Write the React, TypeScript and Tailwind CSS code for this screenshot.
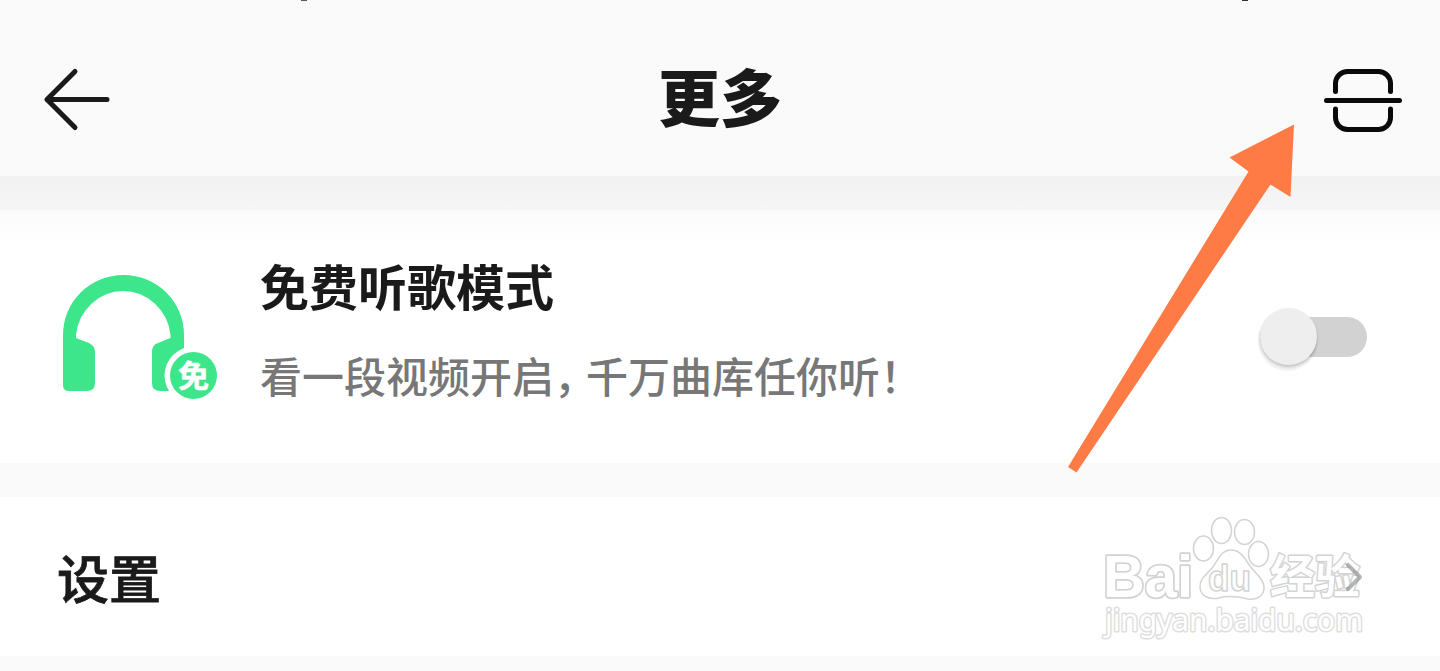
function BackArrow() {
  return (
    <svg width="70" height="66" viewBox="0 0 70 66" fill="none" stroke="#1a1a1a" strokeWidth="5" strokeLinecap="round" strokeLinejoin="round">
      <path d="M34 4.500 6 32.500 34 60.500M6 32.500H66" />
    </svg>
  );
}

function ScanIcon() {
  return (
    <svg width="80" height="66" viewBox="0 0 80 66" fill="none" stroke="#0a0a0a" strokeWidth="5" strokeLinecap="round">
      <path d="M12.500 24.500V16A12 12 0 0 1 24.500 4.500H55.500A12 12 0 0 1 67.500 16V24.500" />
      <path d="M12.500 42V50.500A12 12 0 0 0 24.500 62.500H55.500A12 12 0 0 0 67.500 50.500V42" />
      <path d="M3.500 33.500H76.500" />
    </svg>
  );
}

function HeadphonesIcon() {
  return (
    <svg width="160" height="130" viewBox="0 0 160 130" fill="#3de68b">
      <path d="M3 63A60.500 60 0 0 1 124 63V119H100Q92 119 92 111V80Q92 73 98 71L110.500 66V63A47.500 49 0 0 0 16 63V66L29 71Q35 74 35 80V111Q35 119 27 119H9Q3 119 3 113Z" />
      <circle cx="133.500" cy="103.500" r="29" fill="#fff" />
      <circle cx="133.500" cy="103.500" r="23.500" />
      <text
        x="133.500"
        y="115"
        fill="#fff"
        stroke="#fff"
        strokeWidth="0.5"
        textAnchor="middle"
        className="text-[31px] font-bold"
      >
        免
      </text>
    </svg>
  );
}

function Toggle() {
  return (
    <div className="flex h-10 w-[107px] items-center rounded-full bg-[#d2d2d2]">
      <div className="-mt-0.5 size-[57px] shrink-0 rounded-full bg-[#eee] shadow-[0_2px_3px_rgba(0,0,0,0.2),-1px_5px_1px_1px_rgba(0,0,0,0.05)]" />
    </div>
  );
}

function Pointer() {
  return (
    <svg className="absolute top-[120px] left-[1060px]" width="240" height="356" viewBox="0 0 240 356" fill="#ff7b45">
      <path d="M234 4.500 230.500 77 210.500 64.500 16.500 352.500 8 347 188.500 51.500 169.500 37.500Z" />
    </svg>
  );
}

function Watermark() {
  return (
    <svg
      className="absolute top-[510px] left-[1095px]"
      width="285"
      height="140"
      viewBox="0 0 285 140"
      fill="#fff"
      stroke="#d3d3d3"
      strokeWidth="1.500"
      strokeLinejoin="round"
    >
      <text x="8" y="87" textLength="90" lengthAdjust="spacingAndGlyphs" className="font-['Liberation_Sans'] text-[59px] font-bold" strokeWidth="3.500" paintOrder="stroke">
        Bai
      </text>
      <ellipse cx="108.500" cy="38.500" rx="10" ry="12.500" />
      <ellipse cx="126.500" cy="20.500" rx="10" ry="13" />
      <ellipse cx="149.500" cy="22" rx="10" ry="12.500" />
      <ellipse cx="163.500" cy="44" rx="10" ry="12.500" />
      <path d="M136 40C146 40 150 49 155 56C160 63 170 70 169 79C168 87 161 90 153 89C144 87 133 85 124 88C114 90 106 86 105 78C104 69 112 64 118 57C123 50 126 40 136 40Z" />
      <text x="113" y="81" textLength="43" lengthAdjust="spacingAndGlyphs" className="font-['Liberation_Sans'] text-[36px] font-bold">
        du
      </text>
      <text x="175" y="83" textLength="90" lengthAdjust="spacingAndGlyphs" className="text-[46px] font-bold" strokeWidth="3" paintOrder="stroke">
        经验
      </text>
      <text x="10" y="121" textLength="258" lengthAdjust="spacingAndGlyphs" className="font-['Noto_Sans'] text-[30px]" strokeWidth="3" stroke="#dedede" paintOrder="stroke">
        jingyan.baidu.com
      </text>
    </svg>
  );
}

export default function App() {
  return (
    <div className="relative h-[671px] w-[1440px] overflow-hidden bg-[#fafafa] font-['Noto_Sans_CJK_SC',sans-serif] text-[#1a1a1a]">
      <header className="flex h-44 items-center justify-between bg-[#fafafa] pt-6 pr-[37px] pl-[41px]">
        <div className="flex w-20">
          <BackArrow />
        </div>
        <h1 className="mr-1 mb-2.5 text-[62px] leading-none font-black">更多</h1>
        <ScanIcon />
      </header>
      <div className="h-[34px] bg-linear-to-b from-[#f1f1f1] to-[#f6f6f6]" />

      <section className="flex h-[253px] items-start bg-linear-to-b from-[#fbfbfb] to-white to-15% pr-[73px] pl-[60px]">
        <div className="mt-[62px] w-[200px]">
          <HeadphonesIcon />
        </div>
        <div className="flex-1">
          <h2 className="mt-[50px] text-[49px] leading-[49px] font-bold">免费听歌模式</h2>
          <p className="mt-[45px] text-[42px] leading-[42px] font-medium whitespace-nowrap text-[#777]">
            看一段视频开启
            <span className="mr-[11px] [font-feature-settings:'halt']">，</span>
            千万曲库任你听！
          </p>
        </div>
        <div className="mt-[107px]">
          <Toggle />
        </div>
      </section>
      <div className="h-[34px]" />

      <section className="flex h-[159px] items-center justify-between bg-white pr-[77px] pl-[57px]">
        <h2 className="text-[52px] leading-none font-medium [-webkit-text-stroke:0.8px_#1a1a1a]">设置</h2>
        <svg className="relative z-10 opacity-60" width="19" height="30" viewBox="0 0 19 30" fill="none" stroke="#888" strokeWidth="4" strokeLinecap="round" strokeLinejoin="round">
          <path d="M4 3 16 15 4 27" />
        </svg>
      </section>

      {/* bottom edge of the status bar glyphs */}
      <div className="absolute top-0 left-[301px] h-px w-[6px] bg-[#555]" />
      <div className="absolute top-0 left-[1242px] h-px w-[6px] bg-[#333]" />

      <Watermark />
      <Pointer />
    </div>
  );
}
